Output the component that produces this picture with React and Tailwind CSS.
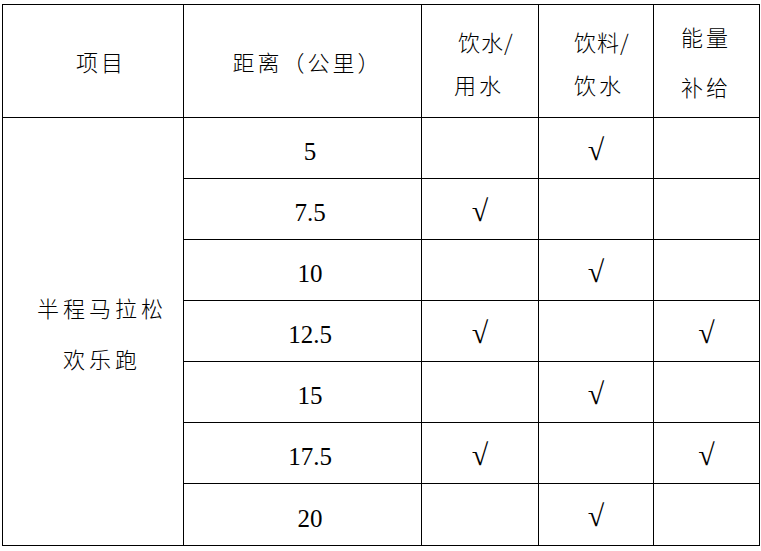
import React from "react";

const cjk = { fontFamily: '"Noto Sans CJK SC", "Noto Sans", sans-serif' };
const serif = { fontFamily: '"Liberation Serif", "Times New Roman", Times, serif' };

// distance rows: [km, water, drink, energy]
const rows = [
  ["5", false, true, false],
  ["7.5", true, false, false],
  ["10", false, true, false],
  ["12.5", true, false, true],
  ["15", false, true, false],
  ["17.5", true, false, true],
  ["20", false, true, false],
];

const Tick = ({ on }) =>
  on ? (
    <span className="inline-block pt-[4px] text-[30px] leading-none text-black" style={serif}>
      √
    </span>
  ) : null;

export default function App() {
  return (
    <div className="w-[761px] h-[551px] bg-white pt-[4px] pl-[2px]">
      <table className="table-fixed border-collapse w-[757px] text-black">
        <colgroup>
          <col className="w-[181px]" />
          <col className="w-[238px]" />
          <col className="w-[117px]" />
          <col className="w-[115px]" />
          <col className="w-[106px]" />
        </colgroup>
        <thead>
          <tr className="h-[113px]">
            <th
              className="border border-black font-light text-[22px] align-middle pt-[1px] pl-[16px] tracking-[3px]"
              style={cjk}
            >
              项目
            </th>
            <th
              className="border border-black font-light text-[22px] align-middle pt-[1px] pl-[10px] tracking-[3px]"
              style={cjk}
            >
              距离（公里）
            </th>
            <th
              className="border border-black font-light text-[22px] align-top pt-[15px] p-0 tracking-[1px] text-left"
              style={cjk}
            >
              <div className="leading-[43px] pl-[36px]">饮水/</div>
              <div className="leading-[43px] pl-[32px] tracking-[3px]">用水</div>
            </th>
            <th
              className="border border-black font-light text-[22px] align-top pt-[15px] p-0 tracking-[1px] text-left"
              style={cjk}
            >
              <div className="leading-[43px] pl-[35px]">饮料/</div>
              <div className="leading-[43px] pl-[35px] tracking-[3px]">饮水</div>
            </th>
            <th
              className="border border-black font-light text-[22px] align-top pt-[6px] p-0 tracking-[3px] text-left"
              style={cjk}
            >
              <div className="leading-[50px] pl-[27px]">能量</div>
              <div className="leading-[50px] pl-[27px]">补给</div>
            </th>
          </tr>
        </thead>
        <tbody>
          {rows.map((r, i) => (
            <tr key={r[0]} className={i === rows.length - 1 ? "h-[62px]" : "h-[61px]"}>
              {i === 0 && (
                <td
                  rowSpan={rows.length}
                  className="border border-black text-center align-middle pt-[3px] pl-[18px] font-light text-[22px] tracking-[4px]"
                  style={cjk}
                >
                  <div className="leading-[51px]">半程马拉松</div>
                  <div className="leading-[51px]">欢乐跑</div>
                </td>
              )}
              <td
                className="border border-black text-center align-middle pt-[8px] pl-[15px] text-[25px]"
                style={serif}
              >
                {r[0]}
              </td>
              <td className="border border-black text-center align-middle">
                <Tick on={r[1]} />
              </td>
              <td className="border border-black text-center align-middle">
                <Tick on={r[2]} />
              </td>
              <td className="border border-black text-center align-middle">
                <Tick on={r[3]} />
              </td>
            </tr>
          ))}
        </tbody>
      </table>
    </div>
  );
}
